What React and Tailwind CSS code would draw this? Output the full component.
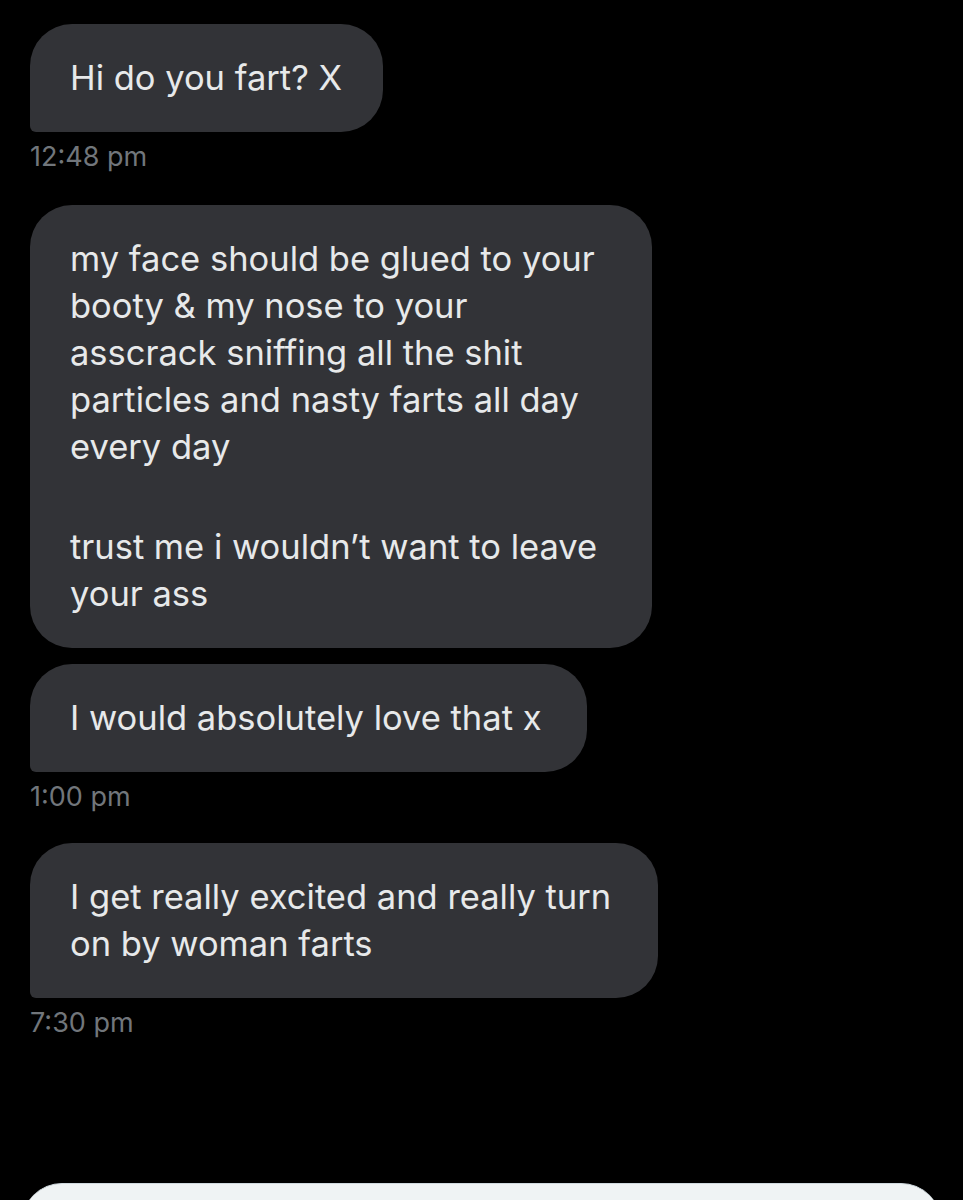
import React from "react";

const font = { fontFamily: "Inter, 'Noto Sans', sans-serif" };

function Bubble({ w, last, className = "", children }) {
  return (
    <div
      className={`bg-[#323337] text-[#e7e9ea] text-[34.5px] leading-[47px] pl-[40px] pt-[30px] pb-[31px] whitespace-nowrap rounded-[42px] ${
        last ? "rounded-bl-[6px]" : ""
      } ${w} ${className}`}
    >
      {children}
    </div>
  );
}

function Time({ children }) {
  return (
    <div className="mt-[9px] text-[27px] leading-[32px] text-[#71767b]">{children}</div>
  );
}

export default function App() {
  return (
    <div
      className="h-[1200px] w-full bg-black overflow-hidden flex flex-col items-start pl-[30px] pt-[24px]"
      style={font}
    >
      <Bubble w="w-[353px]" last>
        Hi do you fart? X
      </Bubble>
      <Time>12:48 pm</Time>

      <Bubble w="w-[622px]" className="mt-[32px]">
        <div>
          my face should be glued to your
          <br />
          booty &amp; my nose to your
          <br />
          asscrack sniffing all the shit
          <br />
          particles and nasty farts all day
          <br />
          every day
        </div>
        <div className="mt-[53px]">
          trust me i wouldn’t want to leave
          <br />
          your ass
        </div>
      </Bubble>
      <Bubble w="w-[557px]" last className="mt-[16px]">
        I would absolutely love that x
      </Bubble>
      <Time>1:00 pm</Time>

      <Bubble w="w-[628px]" last className="mt-[30px]">
        I get really excited and really turn
        <br />
        on by woman farts
      </Bubble>
      <Time>7:30 pm</Time>

      <div className="mt-[144px] -ml-[8px] w-[919px] h-[80px] shrink-0 bg-[#eff3f4] rounded-t-[40px] border-t border-[#cfd9de]" />
    </div>
  );
}
